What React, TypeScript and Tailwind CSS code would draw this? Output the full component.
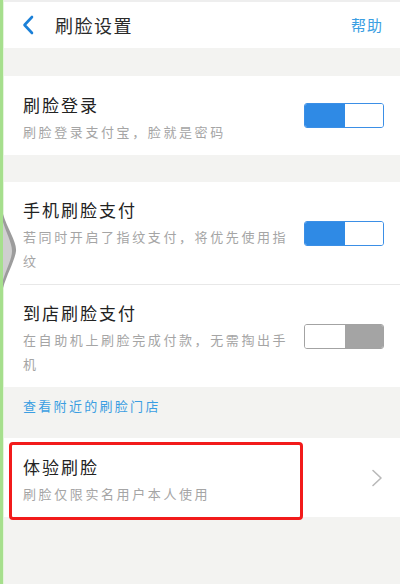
import React from "react";

const font = { fontFamily: '"Noto Sans CJK SC", "Noto Sans", sans-serif' };

function Toggle({ on }: { on: boolean }) {
  return on ? (
    <div className="flex h-[25px] w-[80px] overflow-hidden rounded-[3px] border border-[#3b8fe6]">
      <div className="w-[40px] bg-[#2f8ae5]" />
      <div className="flex-1 bg-white" />
    </div>
  ) : (
    <div className="flex h-[25px] w-[80px] overflow-hidden rounded-[3px] border border-[#a3a3a3]">
      <div className="w-[40px] bg-white" />
      <div className="flex-1 bg-[#a4a4a4]" />
    </div>
  );
}

function Row({
  title,
  sub,
  on,
  h,
}: {
  title: string;
  sub: string;
  on: boolean;
  h: string;
}) {
  return (
    <div className={`flex items-center bg-white pr-[16px] ${h}`}>
      <div className="flex-1 pl-[19px] pt-[5px]">
        <div className="text-[17px] leading-[24px] tracking-[2px] text-[#222]">{title}</div>
        <div className="mt-[3px] w-[275px] text-[13px] leading-[24px] tracking-[2.6px] text-[#a5a5a5]">
          {sub}
        </div>
      </div>
      <Toggle on={on} />
    </div>
  );
}

export default function App() {
  return (
    <div className="relative flex h-[584px] w-[400px] overflow-hidden bg-[#f3f3f1]" style={font}>
      <div className="w-[3px] shrink-0 bg-[#a6df8d]" />
      <div className="w-[1px] shrink-0 bg-[#e4f5dc]" />
      <div className="flex flex-1 flex-col">
        {/* header */}
        <div className="flex h-[48px] items-center border-t-2 border-[#eeeeee] bg-white pr-[17px]">
          <svg width="12" height="20" viewBox="0 0 12 20" className="ml-[18px]">
            <path d="M10 2 L2.5 10 L10 18" fill="none" stroke="#1b80d8" strokeWidth="2.6" strokeLinecap="round" strokeLinejoin="round" />
          </svg>
          <div className="ml-[21px] flex-1 text-[18px] tracking-[1.5px] text-[#2a2a2a]">刷脸设置</div>
          <div className="text-[15px] tracking-[1px] text-[#3a9ee2]">帮助</div>
        </div>
        <div className="h-[28px]" />
        <Row title="刷脸登录" sub="刷脸登录支付宝，脸就是密码" on={true} h="h-[79px]" />
        <div className="h-[27px]" />
        <Row
          title="手机刷脸支付"
          sub="若同时开启了指纹支付，将优先使用指纹"
          on={true}
          h="h-[102px]"
        />
        <div className="flex bg-white">
          <div className="w-[16px]" />
          <div className="h-px flex-1 bg-[#e8e8e8]" />
        </div>
        <Row
          title="到店刷脸支付"
          sub="在自助机上刷脸完成付款，无需掏出手机"
          on={false}
          h="h-[102px]"
        />
        <div className="flex h-[51px] items-start pl-[19px] pt-[8px]">
          <span className="text-[13px] leading-[22px] tracking-[2.3px] text-[#3a9ee2]">查看附近的刷脸门店</span>
        </div>
        <div className="relative flex h-[79px] items-center bg-white pr-[17px]">
          <div className="flex-1 pl-[19px] pt-[6px]">
            <div className="text-[17px] leading-[24px] tracking-[2px] text-[#222]">体验刷脸</div>
            <div className="mt-[3px] text-[13px] leading-[24px] tracking-[2.6px] text-[#a5a5a5]">
              刷脸仅限实名用户本人使用
            </div>
          </div>
          <svg width="12" height="18" viewBox="0 0 12 18">
            <path d="M2 1.5 L10 9 L2 16.5" fill="none" stroke="#b9b9b9" strokeWidth="1.6" strokeLinecap="round" strokeLinejoin="round" />
          </svg>
          <div className="absolute left-[5px] top-[4px] h-[78px] w-[294px] rounded-[4px] border-[3px] border-[#f21b1b]" />
        </div>
        <div className="flex-1" />
      </div>
      {/* page curl artifact on left edge */}
      <svg className="absolute left-[3px] top-[214px]" width="16" height="74" viewBox="0 0 16 74">
        <path d="M0 0 C4 14 14 28 13 37 C12 46 4 60 0 74 Z" fill="#9c9c9c" />
        <path d="M0 8 C3 18 9 29 9 37 C9 45 3 56 0 66 Z" fill="#cfcfcf" />
      </svg>
    </div>
  );
}
